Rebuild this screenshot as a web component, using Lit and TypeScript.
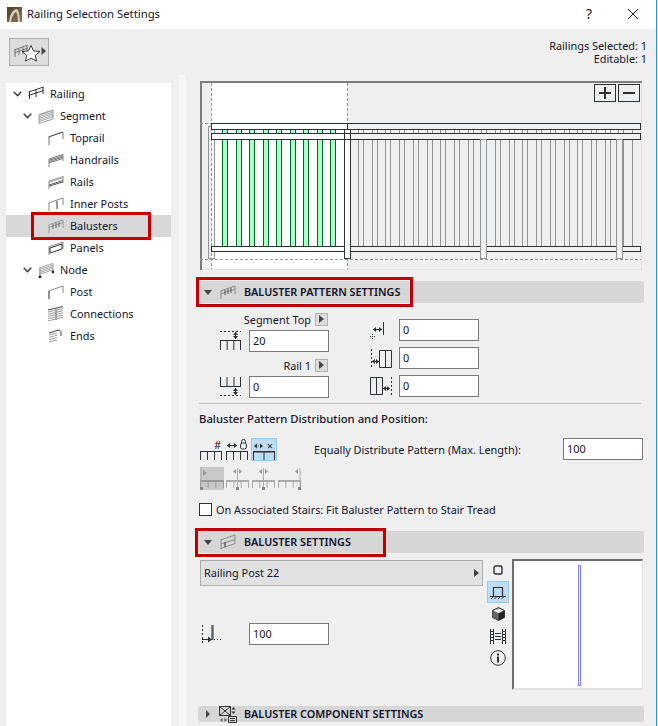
import { LitElement, html, css, svg } from "lit";
import { customElement } from "lit/decorators.js";

const DK = "#2a3238";
const GR = "#8f9498";

const range = (n: number) => Array.from({ length: n }, (_, i) => i);

function hatch(y0: number, n: number, step: number, col: string) {
  return range(n).map(
    (i) => svg`<path d="M1 ${y0 + i * step}L15 ${y0 - 4.5 + i * step}" stroke=${col} fill="none"/>`
  );
}

const tree: Record<string, any> = {
  railing: svg`<path d="M0.5 6L15.5 1M0.5 9.5L15.5 4.5M1.5 6V13M8 4V11M15 1V8" stroke="#333" fill="none"/>`,
  segment: svg`${hatch(7, 5, 1.6, "#a8a8a8")}<path d="M1 6.5L15 2V11L1 15.5Z" stroke="#9a9a9a" fill="none"/>`,
  toprail: svg`<path d="M0.5 7L15 2" stroke="#333" fill="none"/><path d="M1 7V15M15 2V9" stroke="#777" fill="none"/>`,
  handrails: svg`${hatch(7, 4, 1.3, "#777")}<path d="M1 7V15M15 2V9" stroke="#888" fill="none"/>`,
  rails: svg`${hatch(7, 2, 1.3, "#999")}${hatch(11, 2, 1.3, "#555")}<path d="M1 7V15M15 2V9" stroke="#888" fill="none"/>`,
  inner: svg`<path d="M0.5 7L15 2M1 7V15M15 2V9" stroke="#888" fill="none"/><path d="M9 5V13" stroke="#333" fill="none"/>`,
  balusters: svg`<path d="M0.5 7L15 2M0.5 9.5L15 4.5M1 7V15M15 2V10" stroke="#999" fill="none"/><path d="M5 6V11M8 5V10M11 4V9" stroke="#666" fill="none"/>`,
  panels: svg`<path d="M0.5 7L15 2M1 7V15M15 2V9" stroke="#888" fill="none"/><path d="M2 8L14 4V9L2 13Z" stroke="#333" fill="none"/>`,
  node: svg`${hatch(6, 5, 1.6, "#a8a8a8")}<path d="M2 6V16M15 1V10" stroke="#999" fill="none"/><circle cx="2" cy="15" r="1.4" fill="#222"/><circle cx="15" cy="10" r="1.4" fill="#222"/>`,
  post: svg`<path d="M0.5 7L15 2M15 2V9" stroke="#888" fill="none"/><path d="M1 7V15" stroke="#222" fill="none"/>`,
  conn: svg`${range(5).map((i) => svg`<path d="M0 ${6 + i * 2.2}L7 ${4.5 + i * 2.2}M9 ${4 + i * 2.2}L15 ${2.5 + i * 2.2}" stroke="#999" fill="none"/>`)}<path d="M0 4L15 0.5M8 3V14" stroke="#444" fill="none"/>`,
  ends: svg`${range(4).map((i) => svg`<path d="M1 ${7 + i * 2.3}L9 ${5 + i * 2.3}" stroke="#999" fill="none"/>`)}<path d="M1 5L9 2.5C12 1.5 13 3 13 5V8" stroke="#444" fill="none"/>`,
};

const rows = [
  ["Railing", "railing", 0, true],
  ["Segment", "segment", 1, true],
  ["Toprail", "toprail", 2, false],
  ["Handrails", "handrails", 2, false],
  ["Rails", "rails", 2, false],
  ["Inner Posts", "inner", 2, false],
  ["Balusters", "balusters", 2, false],
  ["Panels", "panels", 2, false],
  ["Node", "node", 1, true],
  ["Post", "post", 2, false],
  ["Connections", "conn", 2, false],
  ["Ends", "ends", 2, false],
] as [string, string, number, boolean][];

const ic = (w: number, h: number, body: any) =>
  html`<svg class="ic" width=${w} height=${h} viewBox="0 0 ${w} ${h}">${body}</svg>`;

const arrowsH = (x0: number, x1: number, y: number, c = DK) => svg`
  <path d="M${x0} ${y + 0.5}H${x1}" stroke=${c}/>
  <path d="M${x0} ${y + 0.5}l3 -2.5v5zM${x1} ${y + 0.5}l-3 -2.5v5z" fill=${c}/>`;
const arrowsV = (x: number, y0: number, y1: number) => svg`
  <path d="M${x + 0.5} ${y0}V${y1}" stroke=${DK}/>
  <path d="M${x + 0.5} ${y0}l-2.5 3h5zM${x + 0.5} ${y1}l-2.5 -3h5z" fill=${DK}/>`;
const comb = (x: number, y: number, w: number, h: number, n: number, c = DK, t = 1) => svg`
  <path d="M${x} ${y + t / 2}H${x + w}" stroke=${c} stroke-width=${t}/>
  ${range(n).map((i) => svg`<path d="M${x + 0.5 + (i * (w - 1)) / (n - 1)} ${y}V${y + h}" stroke=${c}/>`)}`;

const balIcon = (col: string) =>
  ic(16, 16, svg`<path d="M0.5 7L15 2M0.5 10L15 5M1 7V15M15 2V10" stroke=${col} fill="none"/><path d="M5 6V11M8 5V10M11 4V9" stroke="#555" fill="none"/>`);
const balIcon2 = ic(16, 16, svg`<path d="M0.5 6L15 1M1 6V15M15 1V10M1 14.5L15 9.5" stroke="#8c8c8c" fill="none"/><path d="M1 10L15 5.5" stroke="#888" fill="none"/><path d="M5 8V13" stroke="#333" fill="none"/>`);

const compIcon = html`<svg class="ic comp" width="18" height="17" viewBox="0 0 18 17">
  <path d="M0.5 0.5H11.5V9.5H0.5ZM0.5 0.5L11.5 9.5M11.5 0.5L0.5 9.5" stroke="#333" fill="none"/>
  <path d="M14.5 1l-2 2.5h4zM14.5 8l-2 -2.5h4z" fill="#333"/>
  <path d="M9.5 10.5H17.5V16.5H9.5ZM11 12.5H16M11 14.5H16" stroke="#333" fill="none"/>
  <path d="M1 14l2.5 -2v4zM8 14l-2.5 -2v4z" fill="#555"/>
</svg>`;

function preview() {
  const green = range(9).map((i) => 222.5 + Math.round(i * 13.5));
  const grey: number[] = [];
  for (let i = 0; i < 21; i++) {
    const b = 358.5 + Math.round(i * 13.7);
    grey.push(b, b + 5);
  }
  return html`<svg class="pv" width="442" height="190" viewBox="200 81 442 190" shape-rendering="crispEdges">
    <rect x="211" y="83" width="136" height="186" fill="#fff"/>
    <path d="M200 269.5H642M641.5 82V270" stroke="#e2e2e2"/>
    <path d="M200 81.5H642" stroke="#7d7d7d" stroke-width="2"/>
    <path d="M200.5 81V270" stroke="#7d7d7d" stroke-width="2"/>
    <path d="M211.5 83V269M347.5 83V269M200 123.5H211M200 259.5H641" stroke="#969696" stroke-dasharray="3 2" fill="none"/>
    ${grey.filter((x) => x < 637).map((x) => svg`<path d="M${x} 129V246" stroke=${GR}/>`)}
    <rect x="208.5" y="126.5" width="6" height="132" fill="none" stroke=${GR}/>
    ${green.map((x) => svg`<rect x=${x} y="129.5" width="5" height="117" fill="#a9ffc4" stroke="#006b2b"/>`)}
    <rect x="211.5" y="123.5" width="429" height="6" fill="#fff" stroke=${DK}/>
    <rect x="211.5" y="133.5" width="429" height="6" fill="#fff" stroke=${DK}/>
    <rect x="211.5" y="246.5" width="429" height="5" fill="#fff" stroke=${DK}/>
    <rect x="347.5" y="246.5" width="293" height="5" fill="#f0f0f0" stroke=${DK}/>
    <rect x="347.5" y="123.5" width="293" height="6" fill="#f0f0f0" stroke=${DK}/>
    <rect x="347.5" y="133.5" width="293" height="6" fill="#f0f0f0" stroke=${DK}/>
    <rect x="344.5" y="129.5" width="6" height="129" fill="#fff" stroke=${DK}/>
    <path d="M345 133.5H350M345 139.5H350" stroke=${DK}/>
    <rect x="480.5" y="139.5" width="6" height="119" fill="#f0f0f0" stroke=${GR}/>
    <rect x="616.5" y="139.5" width="6" height="119" fill="#f0f0f0" stroke=${GR}/>
    <rect x="594.5" y="84.5" width="21" height="17" fill="#efefef" stroke=${DK}/>
    <rect x="618.5" y="84.5" width="21" height="17" fill="#efefef" stroke=${DK}/>
    <path d="M599 93H611M605 87V99" stroke=${DK} stroke-width="2"/>
    <path d="M623 93H635" stroke=${DK} stroke-width="2"/>
  </svg>`;
}

@customElement("app-root")
export class AppRoot extends LitElement {
  static styles = css`
    :host {
      display: block;
      width: 658px;
      height: 726px;
      overflow: hidden;
      background: #fff;
      font: 10.9px "Noto Sans", "Open Sans", sans-serif;
      color: #14142e;
    }
    .win {
      width: 656px;
      height: 726px;
      display: flex;
      flex-direction: column;
      background: #efefef;
      border-right: 1px solid #2c8fe3;
    }
    .title {
      height: 29px;
      background: #fff;
      display: flex;
      align-items: center;
      padding-left: 7px;
      gap: 5px;
      font-size: 11.3px;
      flex: none;
    }
    .title .name {
      flex: 1;
      padding-bottom: 2px;
    }
    .help {
      font-size: 14px;
      color: #222;
      margin-right: 31px;
      padding-bottom: 2px;
    }
    .close {
      margin-right: 18px;
      margin-bottom: 2px;
    }
    .ic {
      display: block;
      flex: none;
    }
    .top {
      height: 46px;
      box-sizing: border-box;
      flex: none;
      display: flex;
      justify-content: space-between;
      align-items: flex-start;
      padding: 9px 9px 0 9px;
    }
    .fav {
      width: 40px;
      height: 28px;
      box-sizing: border-box;
      background: #dcdcdc;
      border: 1px solid #adadad;
      display: flex;
      align-items: center;
      padding-left: 3px;
    }
    .count {
      text-align: right;
      padding-top: 1px;
    }
    .count div {
      height: 13px;
      line-height: 13px;
    }
    .main {
      flex: 1;
      display: flex;
      min-height: 0;
    }
    .tree {
      width: 165px;
      margin: 8px 0 0 6px;
      background: #fff;
      flex: none;
    }
    .strip {
      width: 7px;
      margin-left: 8px;
      background: #f6f6f6;
      flex: none;
    }
    .row {
      height: 22px;
      display: flex;
      align-items: center;
      position: relative;
    }
    .row.sel {
      background: #d8d8d8;
    }
    .row.d0 {
      padding-left: 7px;
    }
    .row.d1 {
      padding-left: 17px;
    }
    .row.d2 {
      padding-left: 27px;
    }
    .chev {
      width: 9px;
      height: 6px;
      flex: none;
      margin-right: 6px;
    }
    .row .lbl {
      margin-left: 6px;
      padding-bottom: 2px;
    }
    .hl {
      position: absolute;
      border: 3px solid #c00000;
      box-sizing: border-box;
      pointer-events: none;
    }
    .hl.t {
      left: 25px;
      top: -3px;
      width: 120px;
      height: 28px;
    }
    .hl.s1 {
      left: -2px;
      top: -4px;
      width: 217px;
      height: 30px;
    }
    .hl.s2 {
      left: -3px;
      top: -3px;
      width: 191px;
      height: 29px;
    }
    .right {
      flex: 1;
      display: flex;
      flex-direction: column;
      padding-top: 6px;
      min-width: 0;
    }
    .pv {
      display: block;
      margin-left: 14px;
      flex: none;
    }
    .sec {
      position: relative;
      margin-left: 12px;
      width: 446px;
      height: 22px;
      background: #d6d6d6;
      border-radius: 3px;
      display: flex;
      align-items: center;
      padding-left: 6px;
      box-sizing: border-box;
      font-weight: 600;
      font-size: 10.8px;
      flex: none;
      color: #10102a;
    }
    .sec .tri {
      width: 8px;
      margin-right: 8px;
      flex: none;
    }
    .sec .txt {
      margin-left: 8px;
      padding-bottom: 2px;
    }
    .sec.a {
      margin-top: 10px;
    }
    .sec.b {
      margin-top: 15px;
    }
    .sec.c {
      margin-top: 16px;
      height: 16px;
    }
    .comp {
      margin: 0 -1px;
    }
    .pattern {
      margin-left: 34px;
      height: 100px;
      padding-top: 9px;
      box-sizing: border-box;
      display: flex;
      gap: 41px;
      flex: none;
    }
    .col {
      width: 109px;
      display: flex;
      flex-direction: column;
    }
    .col.r {
      padding-top: 7px;
      gap: 6px;
    }
    .lrow {
      height: 14px;
      display: flex;
      justify-content: flex-end;
      align-items: center;
      gap: 4px;
      margin-bottom: 4px;
      padding-right: 1px;
    }
    .lrow.n {
      margin-top: 6px;
    }
    .mini {
      width: 11px;
      height: 11px;
      border: 1px solid #b0b0b0;
      background: #dcdcdc;
      display: flex;
      align-items: center;
      justify-content: center;
    }
    .field {
      height: 22px;
      display: flex;
      align-items: center;
      justify-content: space-between;
    }
    input.v {
      width: 80px;
      height: 22px;
      box-sizing: border-box;
      border: 1px solid #7a7a7a;
      background: #fff;
      padding: 0 0 2px 3px;
      margin: 0;
      font: inherit;
      color: inherit;
      outline: none;
      border-radius: 0;
    }
    .divider {
      margin-left: 13px;
      width: 442px;
      height: 1px;
      background: #bcbcbc;
      flex: none;
    }
    .heading {
      margin: 7px 0 0 13px;
      height: 16px;
      line-height: 16px;
      font-weight: 500;
      font-size: 11.3px;
      flex: none;
    }
    .dist {
      margin: 11px 0 0 14px;
      display: grid;
      grid-template-columns: 114px 249px 80px;
      grid-template-rows: 23px 23px;
      row-gap: 6px;
      flex: none;
    }
    .tools {
      display: flex;
      gap: 4px;
    }
    .tools.b {
      gap: 2px;
    }
    .tool {
      position: relative;
      width: 22px;
      height: 23px;
    }
    .tools.b .tool {
      width: 24px;
    }
    .tool.on {
      width: 26px;
      margin-left: -1px;
      box-sizing: border-box;
      background: #c0dcf3;
      border: 1px solid #99c9ef;
    }
    .tools.b .tool.off {
      background: #c8c8c8;
    }
    .tool .mark {
      position: absolute;
      right: 1px;
      top: 1px;
      font-size: 11px;
      line-height: 11px;
      color: #222;
    }
    .tool.on .mark {
      right: 3px;
      top: 1px;
    }
    .tool .ic {
      position: absolute;
      left: 0;
      top: 0;
    }
    .distlabel {
      align-self: center;
      padding-bottom: 1px;
    }
    .check {
      margin: 13px 0 0 13px;
      height: 13px;
      display: flex;
      align-items: center;
      gap: 4px;
      flex: none;
    }
    .box {
      width: 11px;
      height: 11px;
      border: 1px solid #333;
      background: #fff;
      flex: none;
    }
    .bal {
      margin: 6px 0 0 14px;
      display: flex;
      flex: none;
      height: 131px;
    }
    .bl {
      width: 283px;
      padding-top: 1px;
      flex: none;
    }
    .drop {
      height: 26px;
      box-sizing: border-box;
      background: #e1e1e1;
      border: 1px solid #adadad;
      display: flex;
      align-items: center;
      justify-content: space-between;
      padding: 0 3px 0 3px;
    }
    .drop span {
      padding-bottom: 2px;
    }
    .lenrow {
      margin: 37px 0 0 2px;
      width: 127px;
      height: 22px;
      display: flex;
      align-items: center;
      justify-content: space-between;
    }
    .side {
      width: 22px;
      margin-left: 4px;
      flex: none;
    }
    .si {
      height: 22px;
      display: flex;
      align-items: center;
      justify-content: center;
      box-sizing: border-box;
    }
    .si.on {
      background: #c0dcf3;
      border: 1px solid #99c9ef;
    }
    .pbox {
      width: 131px;
      height: 131px;
      margin-left: 3px;
      box-sizing: border-box;
      background: #fff;
      border-top: 2px solid #6e6e6e;
      border-left: 2px solid #6e6e6e;
      border-right: 1px solid #e2e2e2;
      border-bottom: 2px solid #e2e2e2;
      display: flex;
      justify-content: center;
      padding: 4px 0 3px 0;
    }
    .line {
      width: 3px;
      box-sizing: border-box;
      margin-left: 3px;
      border: 1px solid #8080ff;
      background: #fff;
      height: 121px;
    }
  `;

  private renderTree() {
    return rows.map(
      ([name, icon, depth, open]) => html`<div class="row d${depth} ${name === "Balusters" ? "sel" : ""}">
        ${open
          ? html`<svg class="chev" viewBox="0 0 9 6"><path d="M0.7 0.8L4.5 4.6L8.3 0.8" stroke="#444" stroke-width="1.5" fill="none"/></svg>`
          : html`<span class="chev"></span>`}
        ${ic(16, 16, tree[icon])}
        <span class="lbl">${name}</span>
        ${name === "Balusters" ? html`<div class="hl t"></div>` : ""}
      </div>`
    );
  }

  render() {
    const triDown = html`<svg class="tri" width="8" height="5" viewBox="0 0 8 5"><path d="M0 0H8L4 5Z" fill="#444"/></svg>`;
    const triRight = html`<svg class="tri" width="8" height="8" viewBox="0 0 8 8"><path d="M2 0L6 4L2 8Z" fill="#444"/></svg>`;
    const miniTri = html`<svg width="5" height="8" viewBox="0 0 5 8"><path d="M0 0L5 4L0 8Z" fill="#444"/></svg>`;
    return html`<div class="win">
      <div class="title">
        <svg class="ic" width="15" height="15" viewBox="0 0 15 15">
          <defs><linearGradient id="g" x1="0" y1="0" x2="1" y2="1"><stop offset="0" stop-color="#4a3e2e"/><stop offset="1" stop-color="#8a7a5e"/></linearGradient></defs>
          <rect width="15" height="15" fill="url(#g)"/>
          <path d="M2 15C3 7 6 2 10 2C12 4 13 10 13 15H11C11 10 10 6 9 5C7 6 5 10 4 15Z" fill="#d8cdb4"/>
        </svg>
        <span class="name">Railing Selection Settings</span>
        <span class="help">?</span>
        <svg class="ic close" width="10" height="10" viewBox="0 0 10 10"><path d="M0 0L10 10M10 0L0 10" stroke="#222" fill="none"/></svg>
      </div>
      <div class="top">
        <div class="fav">
          <svg class="ic" width="34" height="24" viewBox="0 0 34 24">
            <path d="M1 10L15 5M1 13L15 8M2 10V17M6 9V15M10 7V14M14 6V11" stroke="#777" fill="none"/>
            <path d="M18 7L20.6 13L27 13.6L22.2 17.8L23.6 24L18 20.8L12.4 24L13.8 17.8L9 13.6L15.4 13Z" transform="translate(0,-1) scale(1,0.92)" fill="#fff" stroke="#333"/>
            <path d="M28.5 7L33 11L28.5 15Z" fill="#444"/>
          </svg>
        </div>
        <div class="count"><div>Railings Selected: 1</div><div>Editable: 1</div></div>
      </div>
      <div class="main">
        <div class="tree">${this.renderTree()}</div>
        <div class="strip"></div>
        <div class="right">
          ${preview()}
          <div class="sec a">
            ${triDown}${balIcon("#8c8c8c")}<span class="txt">BALUSTER PATTERN SETTINGS</span>
            <div class="hl s1"></div>
          </div>
          <div class="pattern">
            <div class="col">
              <div class="lrow"><span>Segment Top</span><span class="mini">${miniTri}</span></div>
              <div class="field">
                ${ic(21, 20, svg`<path d="M0 0.5H21" stroke=${DK} stroke-dasharray="2 2"/>${arrowsV(15, 1, 8)}${comb(0, 9, 21, 10, 4)}`)}
                <input class="v" .value=${"20"} />
              </div>
              <div class="lrow n"><span>Rail 1</span><span class="mini">${miniTri}</span></div>
              <div class="field">
                ${ic(21, 20, svg`<path d="M0.5 0V9M7 0V9M14 0V9M20.5 0V9M0 9.5H21" stroke=${DK}/><path d="M0 18.5H21" stroke=${DK} stroke-dasharray="2 2"/>${arrowsV(15, 11, 18)}`)}
                <input class="v" .value=${"0"} />
              </div>
            </div>
            <div class="col r">
              <div class="field">
                ${ic(22, 18, svg`<path d="M13.5 1V14" stroke=${DK}/>${arrowsH(3, 12, 8)}<path d="M0 15.5H5M2.5 13V18" stroke=${DK} stroke-dasharray="1 1"/>`)}
                <input class="v" .value=${"0"} />
              </div>
              <div class="field">
                ${ic(22, 20, svg`<path d="M1.5 1V20" stroke=${DK} stroke-dasharray="2 2"/>${arrowsH(2, 9, 13)}<path d="M9.5 2.5H21.5V19.5H9.5ZM15.5 2.5V19.5" stroke=${DK} fill="none"/>`)}
                <input class="v" .value=${"0"} />
              </div>
              <div class="field">
                ${ic(22, 20, svg`<path d="M0.5 1.5H12.5V18.5H0.5ZM6.5 1.5V18.5" stroke=${DK} fill="none"/>${arrowsH(13, 20, 12)}<path d="M21.5 1V20" stroke=${DK} stroke-dasharray="2 2"/>`)}
                <input class="v" .value=${"0"} />
              </div>
            </div>
          </div>
          <div class="divider"></div>
          <div class="heading">Baluster Pattern Distribution and Position:</div>
          <div class="dist">
            <div class="tools">
              <div class="tool">${ic(22, 23, comb(0, 13, 22, 9, 4))}<span class="mark">#</span></div>
              <div class="tool">
                ${ic(22, 23, svg`${comb(0, 13, 22, 9, 4)}${arrowsH(1, 11, 7)}<rect x="14.5" y="5" width="6" height="6" rx="2" fill="none" stroke=${DK}/><path d="M15.5 5V3.5a2 2 0 0 1 4 0V5" fill="none" stroke=${DK}/>`)}
              </div>
              <div class="tool on">
                ${ic(24, 21, svg`${comb(1, 12, 22, 9, 3, DK, 1.5)}<path d="M2 7l3 -2.5v5zM11 7l-3 -2.5v5z" fill=${DK}/><path d="M6 7H7" stroke=${DK}/>`)}
                <span class="mark">×</span>
              </div>
            </div>
            <div class="distlabel">Equally Distribute Pattern (Max. Length):</div>
            <input class="v" .value=${"100"} />
            <div class="tools b">
              <div class="tool off">${ic(24, 23, svg`${comb(0, 13, 24, 8, 4, "#999", 2)}<path d="M3 3l4 3l-4 3z" fill="#999"/><path d="M1 0V20" stroke="#aaa"/><rect x="0" y="20" width="3" height="3" fill="#888"/>`)}</div>
              ${[0, 1, 2].map(
                (i) => html`<div class="tool">
                  ${ic(24, 23, svg`${comb(0, 13, 23, 8, 4, "#aaa", 2)}<path d="M${i === 2 ? 22 : 11.5} 1V20" stroke="#aaa"/><path d="M${i === 2 ? 20 : 10} 2l-3 2.5l3 2.5z" fill="#999"/>${i < 2 ? svg`<path d="M13 2l3 2.5l-3 2.5z" fill="#999"/>` : ""}<rect x=${i === 2 ? 20 : 10} y="20" width="3" height="3" fill="#888"/>`)}
                </div>`
              )}
            </div>
          </div>
          <div class="check"><span class="box"></span><span>On Associated Stairs: Fit Baluster Pattern to Stair Tread</span></div>
          <div class="sec b">
            ${triDown}${balIcon2}<span class="txt">BALUSTER SETTINGS</span>
            <div class="hl s2"></div>
          </div>
          <div class="bal">
            <div class="bl">
              <div class="drop"><span>Railing Post 22</span>${miniTri}</div>
              <div class="lenrow">
                ${ic(20, 18, svg`<path d="M0.5 0V18" stroke=${DK} stroke-dasharray="2 2"/><path d="M10 0V15M11 0V15" stroke=${DK}/><path d="M0 14.5H9" stroke=${DK}/><path d="M10 14.5l-4 -3v6z" fill=${DK}/><path d="M12 14.5H20" stroke=${DK} stroke-dasharray="1 2"/>`)}
                <input class="v" .value=${"100"} />
              </div>
            </div>
            <div class="side">
              <div class="si">${ic(10, 10, svg`<rect x="1" y="1" width="8" height="8" rx="1.5" fill="none" stroke="#2a3238" stroke-width="1.4"/>`)}</div>
              <div class="si on">${ic(16, 15, svg`<path d="M3.5 11V2.5H12.5V11" fill="none" stroke=${DK} stroke-width="1.2"/><path d="M0 11.5H16" stroke=${DK}/><path d="M1 14L3 12M4.5 14L6.5 12M8 14L10 12M11.5 14L13.5 12" stroke=${DK}/>`)}</div>
              <div class="si">${ic(13, 14, svg`<path d="M6.5 0.5L12.5 3.5V10.5L6.5 13.5L0.5 10.5V3.5Z" fill="#666" stroke="#444"/><path d="M6.5 1.5L11.5 3.8L6.5 6.2L1.5 3.8Z" fill="#e8e8e8"/><path d="M6.5 6.5L12.5 3.5V10.5L6.5 13.5Z" fill="#222"/>`)}</div>
              <div class="si">${ic(16, 15, svg`<path d="M0.5 0V15M3.5 0V15M12.5 0V15M15.5 0V15" stroke=${DK} fill="none"/><path d="M0 2.5H4M0 5.5H4M0 8.5H4M0 11.5H4M12 2.5H16M12 5.5H16M12 8.5H16M12 11.5H16M5 4.5H11M5 7.5H11M5 10.5H11" stroke=${DK}/>`)}</div>
              <div class="si">${ic(16, 16, svg`<circle cx="8" cy="8" r="7.3" fill="none" stroke="#333"/><rect x="7" y="6.5" width="2" height="6" fill="#333"/><rect x="7" y="3.5" width="2" height="2" fill="#333"/>`)}</div>
            </div>
            <div class="pbox"><div class="line"></div></div>
          </div>
          <div class="sec c">
            ${triRight}${compIcon}<span class="txt">BALUSTER COMPONENT SETTINGS</span>
          </div>
        </div>
      </div>
    </div>`;
  }
}
